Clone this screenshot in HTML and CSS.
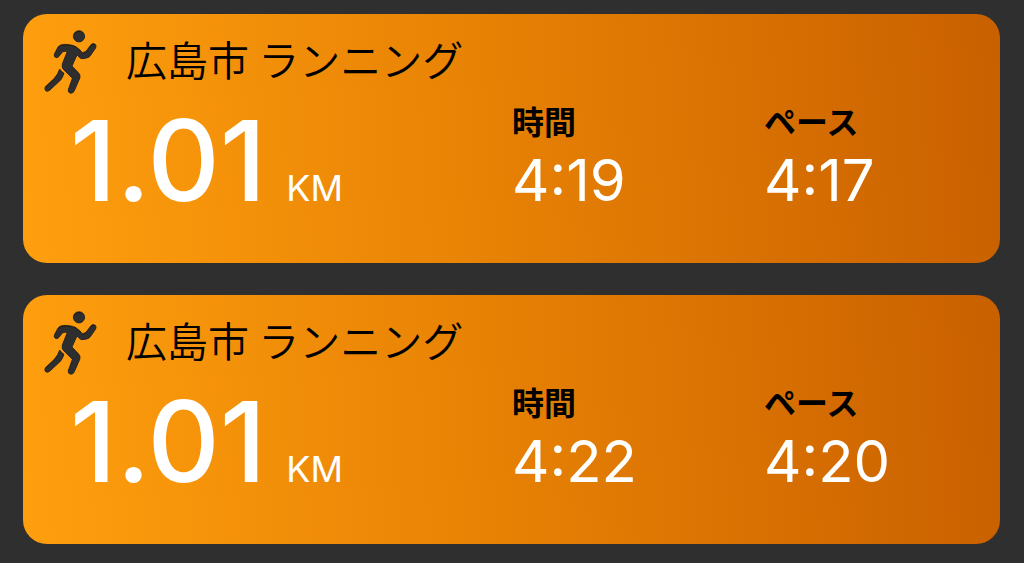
FILE: index.html
```
<!DOCTYPE html>
<html lang="ja">

<head>
    <meta charset="UTF-8">
    <meta name="viewport" content="width=device-width, initial-scale=1.0">
    <title>ランニング</title>
    <link rel="stylesheet" href="styles.css">
</head>

<body>
    <!-- ランナーのアイコン -->
    <svg class="icon-defs" width="0" height="0" aria-hidden="true">
        <defs>
            <path id="runner" d="M129 20a17 17 0 1 1 0 34a17 17 0 1 1 0-34zM77 62Q88 60 101 62Q116 64 121 69Q132 76 139 86L148 83Q153 79 164 63Q170 56 177 60Q183 65 179 72L163 95Q159 101 152 102L140 104Q134 105 130 100L123 93L108 126L128 147Q134 153 132 161L115 200Q112 208 104 208Q94 205 97 196L109 163L83 137Q76 130 79 119L94 82Q84 81 79 84L68 98Q62 104 56 98Q53 94 56 88L66 69Q70 63 77 62zM71 135Q76 143 84 148Q81 158 74 168L42 198Q35 204 29 200Q24 195 28 188L55 163Q66 150 71 135z" />
            <clipPath id="runner-clip">
                <use href="#runner" />
            </clipPath>
        </defs>
    </svg>

    <main class="list">
        <article class="card">
            <header class="card-header">
                <svg class="card-icon" viewBox="0 0 210 225" aria-hidden="true">
                    <use href="#runner" fill="#1a1816" stroke="#1a1816" stroke-width="2" />
                    <g clip-path="url(#runner-clip)">
                        <use href="#runner" fill="#2e2e2e" stroke="#2e2e2e" stroke-width="4" x="1" y="5" />
                    </g>
                </svg>
                <h2 class="card-title">広島市 ランニング</h2>
            </header>
            <div class="card-body">
                <p class="distance">1.01<span class="unit">KM</span></p>
                <dl class="stat">
                    <dt>時間</dt>
                    <dd>4:19</dd>
                </dl>
                <dl class="stat">
                    <dt>ペース</dt>
                    <dd>4:17</dd>
                </dl>
            </div>
        </article>

        <article class="card">
            <header class="card-header">
                <svg class="card-icon" viewBox="0 0 210 225" aria-hidden="true">
                    <use href="#runner" fill="#1a1816" stroke="#1a1816" stroke-width="2" />
                    <g clip-path="url(#runner-clip)">
                        <use href="#runner" fill="#2e2e2e" stroke="#2e2e2e" stroke-width="4" x="1" y="5" />
                    </g>
                </svg>
                <h2 class="card-title">広島市 ランニング</h2>
            </header>
            <div class="card-body">
                <p class="distance">1.01<span class="unit">KM</span></p>
                <dl class="stat">
                    <dt>時間</dt>
                    <dd>4:22</dd>
                </dl>
                <dl class="stat">
                    <dt>ペース</dt>
                    <dd>4:20</dd>
                </dl>
            </div>
        </article>
    </main>
</body>

</html>
```

FILE: styles.css
```
* {
    box-sizing: border-box;
    margin: 0;
    padding: 0;
}

body {
    background-color: #2f2f2f;
    font-family: Inter, "Noto Sans CJK JP", sans-serif;
    color: #000;
}

.icon-defs {
    position: absolute;
}

.list {
    display: flex;
    flex-direction: column;
    gap: 32px;
    padding: 14px 24px 19px 23px;
}

.card {
    padding: 10px 0 43px;
    border-radius: 24px;
    background: linear-gradient(86deg, #ff9f0e, #e68004 50%, #c96000);
}

.card-header {
    display: flex;
    gap: 20px;
    height: 76px;
    padding-left: 13px;
}

.card-icon {
    width: 70px;
    height: 75px;
}

.card-title {
    font-family: "Noto Sans CJK JP", sans-serif;
    font-size: 41px;
    font-weight: 350;
    line-height: 68px;
}

.card-body {
    display: grid;
    grid-template-columns: 1fr 252px 236px;
    align-items: end;
}

.distance {
    display: flex;
    align-items: baseline;
    gap: 20px;
    padding-left: 47px;
    font-size: 112px;
    font-weight: 500;
    line-height: 120px;
    color: #fff;
}

.unit {
    font-size: 36px;
    font-weight: 400;
    line-height: 40px;
}

.stat dt {
    font-family: "Noto Sans CJK JP", sans-serif;
    font-size: 32px;
    font-weight: 700;
    line-height: 40px;
}

.stat dd {
    font-size: 58px;
    line-height: 80px;
    color: #fff;
}
```
